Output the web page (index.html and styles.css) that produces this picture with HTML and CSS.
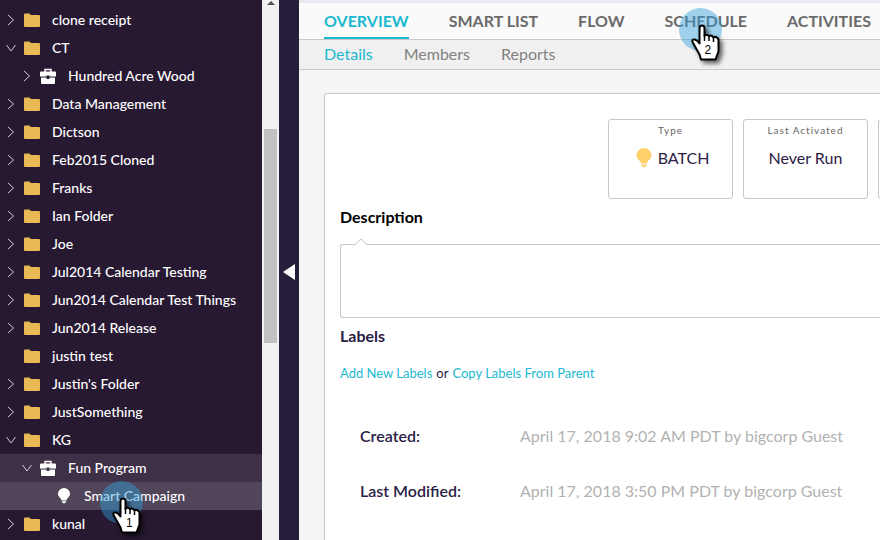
FILE: index.html
```
<!DOCTYPE html>
<html lang="en">
<head>
<meta charset="utf-8">
<title>Smart Campaign</title>
<link rel="stylesheet" href="styles.css">
</head>
<body>
<svg class="defs" aria-hidden="true">
  <symbol id="right" viewBox="0 0 10 12"><path d="M2 1l5.500 5L2 11" fill="none" stroke="#d2ced8" stroke-width="1"/></symbol>
  <symbol id="down" viewBox="0 0 10 12"><path d="M.5 3L5 9l4.500-6" fill="none" stroke="#d2ced8" stroke-width="1"/></symbol>
  <symbol id="folder" viewBox="0 0 16 16"><path d="M0 2.500Q0 1.500 1 1.500H5.500L7 3H15Q16 3 16 4V14Q16 15 15 15H1Q0 15 0 14Z" fill="#e9b954"/></symbol>
  <symbol id="case" viewBox="0 0 16 16"><path d="M5 4V1.500H11V4" fill="none" stroke="#fff" stroke-width="1.500"/><path d="M1 3.500H15Q16 3.500 16 4.500V8.500H9.500V7.500H6.500V8.500H0V4.500Q0 3.500 1 3.500ZM1 9.500H6.500V11H9.500V9.500H15V15Q15 16 14 16H2Q1 16 1 15Z" fill="#fff"/></symbol>
  <symbol id="bulb" viewBox="0 0 16 20"><path d="M8 0a7.500 7.500 0 0 1 7.500 7.500c0 3.500-3.500 4.500-4.500 8H5C4 12 .5 11 .5 7.500A7.500 7.500 0 0 1 8 0ZM5 16.500h6L10 18.500H9L8 20 7 18.500H6Z" fill="currentColor"/></symbol>
  <symbol id="hand" viewBox="0 0 56 60">
    <path d="M20.500 34V20Q20.500 17.500 23 17.500Q25.500 17.500 25.500 20V28Q27.500 25.500 30 28Q32.500 26.500 34.500 29.500Q37 27.500 39.500 31.500V43.500L36.500 51.500H22L20.500 46.500L13.500 34Q12.500 31 16 31.500Q18 32 20.500 35.500Z" fill="#fff" stroke="#000" stroke-width="2" stroke-linejoin="round"/>
    <path d="M25.500 27v6M30 28v5M34.500 29v5" stroke="#000" stroke-width="1.500"/>
  </symbol>
</svg>
<div class="app">
  <nav class="sidebar" aria-label="Marketing tree">
    <ul class="tree">
      <li><a href="#"><svg class="chev"><use href="#right"/></svg><svg class="icon"><use href="#folder"/></svg>clone receipt</a></li>
      <li><a href="#"><svg class="chev"><use href="#down"/></svg><svg class="icon"><use href="#folder"/></svg>CT</a></li>
      <li><a href="#" class="level-2"><svg class="chev"><use href="#right"/></svg><svg class="icon"><use href="#case"/></svg>Hundred Acre Wood</a></li>
      <li><a href="#"><svg class="chev"><use href="#right"/></svg><svg class="icon"><use href="#folder"/></svg>Data Management</a></li>
      <li><a href="#"><svg class="chev"><use href="#right"/></svg><svg class="icon"><use href="#folder"/></svg>Dictson</a></li>
      <li><a href="#"><svg class="chev"><use href="#right"/></svg><svg class="icon"><use href="#folder"/></svg>Feb2015 Cloned</a></li>
      <li><a href="#"><svg class="chev"><use href="#right"/></svg><svg class="icon"><use href="#folder"/></svg>Franks</a></li>
      <li><a href="#"><svg class="chev"><use href="#right"/></svg><svg class="icon"><use href="#folder"/></svg>Ian Folder</a></li>
      <li><a href="#"><svg class="chev"><use href="#right"/></svg><svg class="icon"><use href="#folder"/></svg>Joe</a></li>
      <li><a href="#"><svg class="chev"><use href="#right"/></svg><svg class="icon"><use href="#folder"/></svg>Jul2014 Calendar Testing</a></li>
      <li><a href="#"><svg class="chev"><use href="#right"/></svg><svg class="icon"><use href="#folder"/></svg>Jun2014 Calendar Test Things</a></li>
      <li><a href="#"><svg class="chev"><use href="#right"/></svg><svg class="icon"><use href="#folder"/></svg>Jun2014 Release</a></li>
      <li><a href="#"><svg class="chev"></svg><svg class="icon"><use href="#folder"/></svg>justin test</a></li>
      <li><a href="#"><svg class="chev"><use href="#right"/></svg><svg class="icon"><use href="#folder"/></svg>Justin's Folder</a></li>
      <li><a href="#"><svg class="chev"><use href="#right"/></svg><svg class="icon"><use href="#folder"/></svg>JustSomething</a></li>
      <li><a href="#"><svg class="chev"><use href="#down"/></svg><svg class="icon"><use href="#folder"/></svg>KG</a></li>
      <li><a href="#" class="level-2 parent"><svg class="chev"><use href="#down"/></svg><svg class="icon"><use href="#case"/></svg>Fun Program</a></li>
      <li><a href="#" class="level-3 selected" aria-current="page"><svg class="chev"></svg><svg class="icon"><use href="#bulb"/></svg>Smart Campaign</a>
        <span class="pointer pointer-tree"><svg><use href="#hand"/></svg><b>1</b></span></li>
      <li><a href="#"><svg class="chev"><use href="#right"/></svg><svg class="icon"><use href="#folder"/></svg>kunal</a></li>
    </ul>
  </nav>
  <div class="scrollbar" aria-hidden="true"><span class="scroll-up"></span><span class="thumb"></span></div>
  <button class="collapse" aria-label="Collapse tree"><svg viewBox="0 0 12 16"><path d="M0 8L12 0V16Z" fill="#fff"/></svg></button>
  <main class="main">
    <nav class="tabs" aria-label="Campaign">
      <a href="#" class="active">OVERVIEW</a>
      <a href="#">SMART LIST</a>
      <a href="#">FLOW</a>
      <a href="#">SCHEDULE<span class="pointer pointer-tab"><svg><use href="#hand"/></svg><b>2</b></span></a>
      <a href="#">ACTIVITIES</a>
    </nav>
    <nav class="subtabs" aria-label="Overview">
      <a href="#" class="active">Details</a>
      <a href="#">Members</a>
      <a href="#">Reports</a>
    </nav>
    <section class="panel">
      <div class="stats">
        <div class="stat"><span class="stat-name">Type</span><span class="stat-value"><svg class="stat-bulb"><use href="#bulb"/></svg>BATCH</span></div>
        <div class="stat"><span class="stat-name">Last Activated</span><span class="stat-value">Never Run</span></div>
        <div class="stat"></div>
      </div>
      <label class="heading description-label" for="description">Description</label>
      <div class="description">
        <svg class="notch" viewBox="0 0 14 8"><path d="M1 7L7 1L13 7V8H1Z" fill="#fff"/><path d="M.5 7L7 1L13.500 7" fill="none" stroke="#c8c8c8"/></svg>
        <textarea id="description" readonly></textarea>
      </div>
      <h2 class="heading">Labels</h2>
      <p class="label-actions"><a href="#">Add New Labels</a><span>or</span><a href="#">Copy Labels From Parent</a></p>
      <dl class="dates">
        <dt>Created:</dt><dd>April 17, 2018 9:02 AM PDT by bigcorp Guest</dd>
        <dt>Last Modified:</dt><dd>April 17, 2018 3:50 PM PDT by bigcorp Guest</dd>
      </dl>
    </section>
  </main>
</div>
</body>
</html>
```
FILE: styles.css
```
* { box-sizing: border-box; }
body { margin: 0; font-family: Lato, "Liberation Sans", sans-serif; color: #2b2045; }
a { color: inherit; text-decoration: none; }
.defs { position: absolute; width: 0; height: 0; }
.app { display: flex; height: 100vh; overflow: hidden; }

.sidebar { flex: 0 0 262px; background: #271932; }
.tree { margin: 0; padding: 6px 0 0; list-style: none; }
.tree li { position: relative; }
.tree a { display: flex; align-items: center; height: 28px; padding: 0 0 2px 6px; color: #fff; font-size: 14px; font-weight: 500; white-space: nowrap; }
.tree .level-2 { padding-left: 22px; }
.tree .level-3 { padding-left: 38px; }
.tree .parent { background: #3d3047; }
.tree .selected { background: #514559; }
.chev { width: 10px; height: 12px; margin: 2px 8px 0 0; }
.icon { width: 16px; height: 16px; margin: 2px 12px 0 0; }

.scrollbar { flex: 0 0 17px; display: flex; flex-direction: column; align-items: center; background: #f1f1f1; }
.scroll-up { margin-top: 1px; border: 4px solid transparent; border-top: 0; border-bottom-color: #505050; }
.thumb { width: 13px; height: 214px; margin-top: 124px; background: #c1c1c1; }
.collapse { flex: 0 0 20px; padding: 4px 0 0 4px; border: 0; background: #261d3b; }
.collapse svg { display: block; width: 12px; height: 16px; }

.main { flex: 1; min-width: 0; overflow: hidden; background: #f5f5f5; border-top: 3px solid #e9e9ef; }
.tabs, .subtabs { display: flex; padding-left: 25px; font-size: 16px; white-space: nowrap; border-bottom: 1px solid #c9c9c9; }
.tabs { gap: 40px; height: 37px; background: #fafafa; color: #6a6a6a; font-weight: 700; }
.tabs a { position: relative; height: 36px; line-height: 36px; }
.tabs .active { border-bottom: 2px solid #1bb9d1; }
.subtabs { gap: 31px; height: 30px; line-height: 28px; background: #f0f0f0; color: #828282; }
.main .active { color: #1bb9d1; }

.panel { height: 100%; margin: 23px 0 0 25px; padding: 25px 0 0 15px; background: #fff; border: 1px solid #c8c8c8; border-right: 0; border-radius: 3px 0 0; }
.stats { display: flex; gap: 10px; margin-left: 268px; }
.stat { flex: 0 0 125px; height: 80px; padding-top: 3px; text-align: center; border: 1px solid #c8c8c8; border-radius: 3px; }
.stat-name { display: block; color: #666; font-size: 10px; line-height: 14px; letter-spacing: 1px; }
.stat-value { display: flex; align-items: center; justify-content: center; gap: 6px; height: 41px; font-size: 16px; }
.stat-bulb { width: 16px; height: 20px; margin-left: 4px; color: #ffd06c; }
.heading { display: block; margin: 0; font-size: 16px; line-height: 20px; font-weight: 700; }
.description-label { margin-top: 8px; color: #000; }
.description { position: relative; margin-top: 17px; }
.description textarea { display: block; width: 100%; height: 74px; resize: none; background: #fff; border: 1px solid #c8c8c8; border-right: 0; border-radius: 3px 0 0 3px; outline: 0; }
.notch { position: absolute; top: -6px; left: 14px; width: 14px; height: 8px; }
.description + .heading { margin-top: 8px; }
.label-actions { display: flex; gap: 4px; margin: 18px 0 0; font-size: 13px; line-height: 18px; }
.label-actions a { color: #1bb9d1; }
.dates { display: grid; grid-template-columns: 160px 1fr; row-gap: 35px; margin: 44px 0 0 20px; font-size: 16px; line-height: 20px; }
.dates dt { font-weight: 600; }
.dates dd { margin: 0; color: #b2b2b2; }

.pointer { position: absolute; z-index: 2; width: 43px; height: 43px; border-radius: 50%; background: rgba(48, 159, 219, .45); }
.pointer svg { display: block; width: 56px; height: 60px; filter: drop-shadow(3px 3px 2px rgba(0, 0, 0, .6)); }
.pointer b { position: absolute; top: 35px; left: 26px; color: #000; font: 12px/14px "Liberation Sans", sans-serif; }
.pointer-tree { top: -1px; left: 100px; }
.pointer-tab { top: 5px; left: 14px; }
```
